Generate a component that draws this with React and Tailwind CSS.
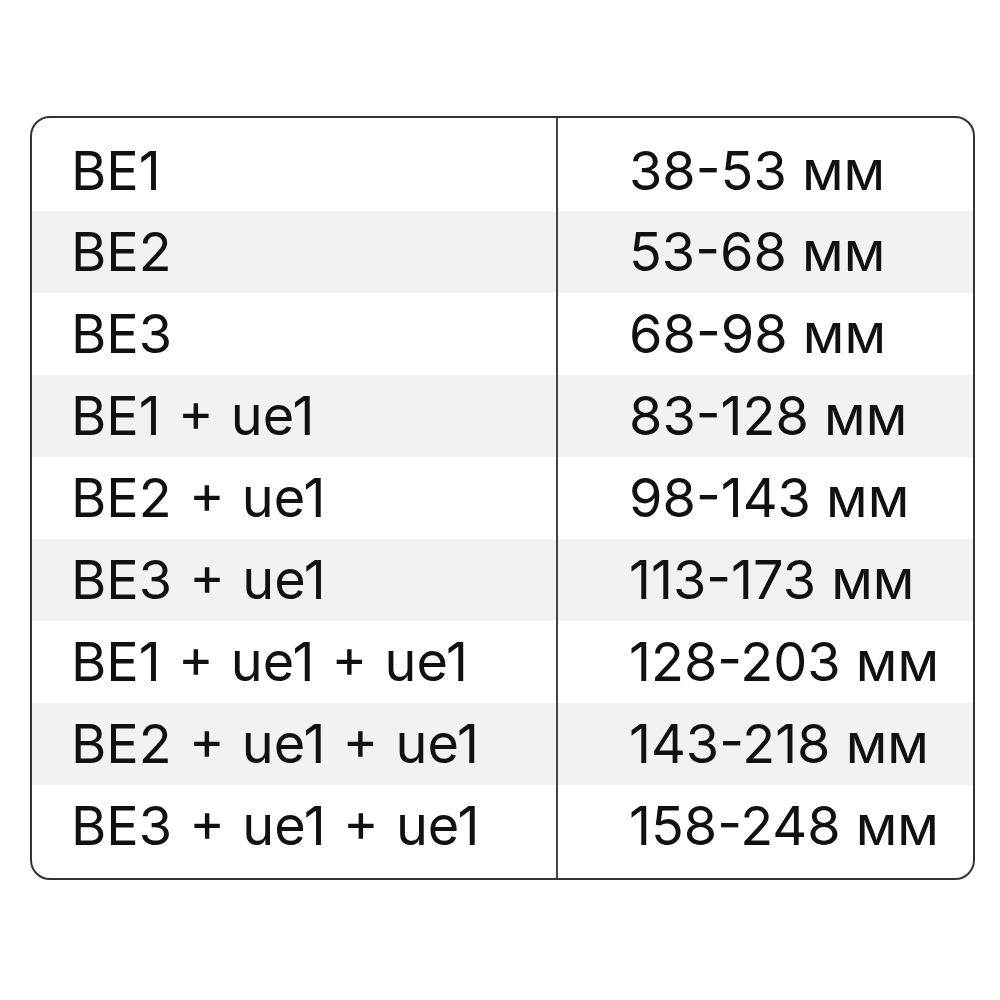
import React from "react";

const rows = [
  ["BE1", "38-53 мм"],
  ["BE2", "53-68 мм"],
  ["BE3", "68-98 мм"],
  ["BE1 + ue1", "83-128 мм"],
  ["BE2 + ue1", "98-143 мм"],
  ["BE3 + ue1", "113-173 мм"],
  ["BE1 + ue1 + ue1", "128-203 мм"],
  ["BE2 + ue1 + ue1", "143-218 мм"],
  ["BE3 + ue1 + ue1", "158-248 мм"],
];

export default function App() {
  return (
    <div className="w-[1000px] h-[1000px] bg-white pt-[116px] pl-[30px]">
      <div
        className="w-[945px] border-2 border-[#333] rounded-[20px] overflow-hidden text-[#111] text-[54px] leading-none"
        style={{ fontFamily: "Inter, 'Noto Sans', sans-serif" }}
      >
        {rows.map(([name, size], i) => {
          const first = i === 0;
          const last = i === rows.length - 1;
          const h = first || last ? "h-[93px]" : "h-[82px]";
          const pad = first ? "pt-[12px]" : last ? "pb-[12px]" : "";
          return (
            <div key={i} className={`flex ${h} ${i % 2 === 1 ? "bg-[#f2f2f2]" : ""}`}>
              <div className={`w-[526px] border-r-2 border-[#444] pl-[39px] flex items-center ${pad}`}>
                <span className="[word-spacing:2px]">{name}</span>
              </div>
              <div className={`flex-1 pl-[71px] flex items-center ${pad}`}>{size}</div>
            </div>
          );
        })}
      </div>
    </div>
  );
}
